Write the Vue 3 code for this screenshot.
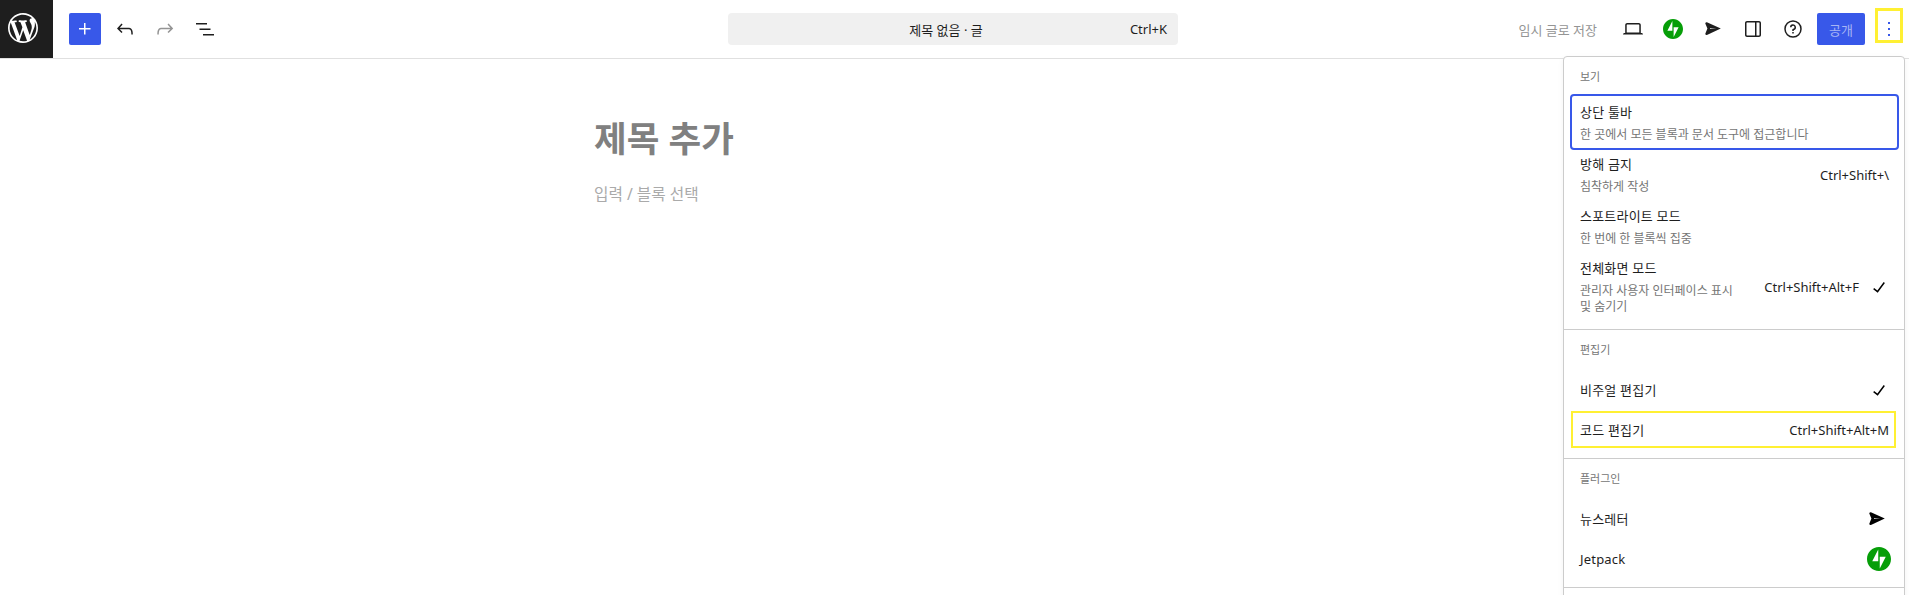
<template>
  <div class="page">
    <header class="topbar">
      <div class="logo">
        <svg viewBox="0 0 20 20" width="30" height="30" fill="#fff">
          <path d="M20 10c0-5.51-4.49-10-10-10C4.48 0 0 4.49 0 10c0 5.52 4.48 10 10 10 5.51 0 10-4.48 10-10zM7.78 15.37L4.37 6.22c.55-.02 1.17-.08 1.17-.08.5-.06.44-1.13-.06-1.11 0 0-1.45.11-2.37.11-.18 0-.37 0-.58-.01C4.12 2.69 6.87 1.11 10 1.11c2.33 0 4.45.87 6.05 2.34-.68-.11-1.65.39-1.65 1.58 0 .74.45 1.36.9 2.1.35.61.55 1.36.55 2.46 0 1.49-1.4 5-1.4 5l-3.03-8.37c.54-.02.82-.17.82-.17.5-.05.44-1.25-.06-1.22 0 0-1.44.12-2.38.12-.87 0-2.33-.12-2.33-.12-.5-.03-.56 1.2-.06 1.22l.92.08 1.26 3.41zM17.41 10c.24-.64.74-1.87.43-4.25.7 1.29 1.05 2.71 1.05 4.25 0 3.29-1.73 6.24-4.4 7.78.97-2.59 1.94-5.2 2.92-7.78zM6.1 18.09C3.12 16.65 1.11 13.53 1.11 10c0-1.3.23-2.48.72-3.59C3.25 10.3 4.67 14.2 6.1 18.09zm4.03-6.63l2.58 6.98c-.86.29-1.76.45-2.71.45-.79 0-1.57-.11-2.29-.33.81-2.38 1.62-4.74 2.42-7.1z" />
        </svg>
      </div>

      <div class="tools">
        <button class="add-btn">
          <svg viewBox="0 0 24 24" width="24" height="24" fill="#fff"><path d="M11 12.5V17.5H12.5V12.5H17.5V11H12.5V6H11V11H6V12.5H11Z" /></svg>
        </button>
        <button class="icon-btn">
          <svg viewBox="0 0 24 24" width="24" height="24"><path d="M18.3 11.7c-.6-.6-1.4-.9-2.3-.9H6.7l2.9-3.3-1.1-1-4.5 5L8.5 16l1-1-2.7-2.7H16c.5 0 .9.2 1.3.5 1 1 1 3.4 1 4.5v.3h1.5v-.2c0-1.5 0-4.3-1.5-5.7z" /></svg>
        </button>
        <button class="icon-btn muted">
          <svg viewBox="0 0 24 24" width="24" height="24"><path d="M15.6 6.5l-1.1 1 2.9 3.3H8c-.9 0-1.7.3-2.3.9-1.4 1.5-1.4 4.2-1.4 5.6v.2h1.5v-.3c0-1.1 0-3.5 1-4.5.3-.3.7-.5 1.3-.5h9.2L14.5 15l1.1 1.1 4.6-4.6-4.6-5z" /></svg>
        </button>
        <button class="icon-btn">
          <svg viewBox="0 0 24 24" width="24" height="24"><path d="M3 6h11v1.5H3V6zm3.5 5.5h11V13h-11v-1.5zM21 17H10v1.5h11V17z" /></svg>
        </button>
      </div>

      <div class="command">
        <span class="command-title">제목 없음 · 글</span>
        <span class="command-key">Ctrl+K</span>
      </div>

      <div class="actions">
        <span class="save">임시 글로 저장</span>
        <button class="icon-btn">
          <svg viewBox="0 0 24 24" width="24" height="24"><path d="M20.5 16h-.7V8c0-1.1-.9-2-2-2H6.2c-1.1 0-2 .9-2 2v8h-.7c-.8 0-1.5.7-1.5 1.5h20c0-.8-.7-1.5-1.5-1.5zM5.7 8c0-.3.2-.5.5-.5h11.6c.3 0 .5.2.5.5v7.6H5.7V8z" /></svg>
        </button>
        <button class="icon-btn">
          <svg viewBox="0 0 32 32" width="20" height="20"><path fill="#069e08" d="M16 0C7.2 0 0 7.2 0 16s7.2 16 16 16 16-7.2 16-16S24.8 0 16 0zm-1 18.9H7l8-15.6v15.6zm2-5.8h8l-8 15.6V13.1z" /></svg>
        </button>
        <button class="icon-btn">
          <svg viewBox="0 0 24 24" width="24" height="24"><path fill-rule="evenodd" d="M5.9 5.3c-.9-.4-1.9.5-1.5 1.4l2 4.9-2 4.9c-.4.9.6 1.8 1.5 1.4L19.8 11.6 5.9 5.3zM9 11.3l6.5.3-6.5.3z" /></svg>
        </button>
        <button class="icon-btn">
          <svg viewBox="0 0 24 24" width="24" height="24"><path d="M18 4H6c-1.1 0-2 .9-2 2v12c0 1.1.9 2 2 2h12c1.1 0 2-.9 2-2V6c0-1.1-.9-2-2-2zm-4 14.5H6c-.3 0-.5-.2-.5-.5V6c0-.3.2-.5.5-.5h8v13zm4.5-.5c0 .3-.2.5-.5.5h-2.5v-13H18c.3 0 .5.2.5.5v12z" /></svg>
        </button>
        <button class="icon-btn">
          <svg viewBox="0 0 24 24" width="24" height="24"><path d="M12 4.75a7.25 7.25 0 100 14.5 7.25 7.25 0 000-14.5zM3.25 12a8.75 8.75 0 1117.5 0 8.75 8.75 0 01-17.5 0zM12 8.75a1.5 1.5 0 01.167 2.99c-.465.052-.917.44-.917 1.01V14h1.5v-.845A3 3 0 109 10.25h1.5a1.5 1.5 0 011.5-1.5zM11.25 15v1.5h1.5V15h-1.5z" /></svg>
        </button>
        <button class="publish">공개</button>
        <button class="more-btn">
          <svg viewBox="0 0 24 24" width="24" height="24" fill="#3858e9"><path d="M13 19h-2v-2h2v2zm0-6h-2v-2h2v2zm0-6h-2V5h2v2z" /></svg>
        </button>
      </div>
    </header>

    <main class="editor">
      <h1 class="post-title">제목 추가</h1>
      <p class="post-hint">입력 / 블록 선택</p>
    </main>

    <!-- Options dropdown -->
    <div class="menu">
      <section v-for="group in groups" :key="group.label" class="menu-group">
        <div class="group-label">{{ group.label }}</div>
        <div
          v-for="item in group.items"
          :key="item.title"
          class="menu-item"
          :class="{ focused: item.focused, marked: item.marked, 'has-desc': item.desc }"
        >
          <div class="item-text">
            <div class="item-title">{{ item.title }}</div>
            <div v-if="item.desc" class="item-desc">{{ item.desc }}</div>
          </div>
          <span v-if="item.shortcut" class="item-key">{{ item.shortcut }}</span>
          <svg v-if="item.icon === 'check'" class="item-icon" viewBox="0 0 24 24" width="24" height="24"><path d="M16.7 7.1l-6.3 8.5-3.3-2.5-.9 1.2 4.5 3.4L17.9 8z" /></svg>
          <svg v-if="item.icon === 'send'" class="item-icon send" viewBox="0 0 24 24" width="24" height="24"><path fill-rule="evenodd" d="M5.9 5.3c-.9-.4-1.9.5-1.5 1.4l2 4.9-2 4.9c-.4.9.6 1.8 1.5 1.4L19.8 11.6 5.9 5.3zM9 11.3l6.5.3-6.5.3z" /></svg>
          <svg v-if="item.icon === 'jetpack'" class="item-icon" viewBox="0 0 32 32" width="24" height="24"><path fill="#069e08" d="M16 0C7.2 0 0 7.2 0 16s7.2 16 16 16 16-7.2 16-16S24.8 0 16 0zm-1 18.9H7l8-15.6v15.6zm2-5.8h8l-8 15.6V13.1z" /></svg>
        </div>
      </section>
      <section class="menu-group last"></section>
    </div>
  </div>
</template>

<script setup>
const groups = [
  {
    label: '보기',
    items: [
      { title: '상단 툴바', desc: '한 곳에서 모든 블록과 문서 도구에 접근합니다', focused: true },
      { title: '방해 금지', desc: '침착하게 작성', shortcut: 'Ctrl+Shift+\\' },
      { title: '스포트라이트 모드', desc: '한 번에 한 블록씩 집중' },
      { title: '전체화면 모드', desc: '관리자 사용자 인터페이스 표시 및 숨기기', shortcut: 'Ctrl+Shift+Alt+F', icon: 'check' }
    ]
  },
  {
    label: '편집기',
    items: [
      { title: '비주얼 편집기', icon: 'check' },
      { title: '코드 편집기', shortcut: 'Ctrl+Shift+Alt+M', marked: true }
    ]
  },
  {
    label: '플러그인',
    items: [
      { title: '뉴스레터', icon: 'send' },
      { title: 'Jetpack', icon: 'jetpack' }
    ]
  }
]
</script>

<style>
html,
body {
  margin: 0;
  background: #fff;
}
</style>

<style scoped>
.page {
  position: relative;
  height: 595px;
  overflow: hidden;
  background: #fff;
  color: #1e1e1e;
  font-family: "Noto Sans", "Noto Sans CJK KR", sans-serif;
  font-size: 13px;
}

button {
  border: 0;
  padding: 0;
  background: none;
  font: inherit;
  display: flex;
  align-items: center;
  justify-content: center;
}

.topbar {
  display: grid;
  grid-template-columns: 728px 450px 1fr;
  align-items: center;
  height: 58px;
  border-bottom: 1px solid #e0e0e0;
  position: relative;
}

.logo {
  position: absolute;
  left: 0;
  top: 0;
  width: 53px;
  height: 58px;
  box-sizing: border-box;
  padding: 0 0 2px 8px;
  background: #1e1e1e;
  display: flex;
  align-items: center;
}

.tools {
  display: flex;
  align-items: center;
  padding-left: 69px;
  gap: 8px;
}

.add-btn {
  width: 32px;
  height: 32px;
  border-radius: 2px;
  background: #3858e9;
}

.icon-btn {
  width: 32px;
  height: 32px;
  fill: #1e1e1e;
}

.icon-btn.muted {
  fill: #949494;
}

.command {
  height: 32px;
  background: #f0f0f0;
  border-radius: 4px;
  position: relative;
  display: flex;
  align-items: center;
  justify-content: center;
  padding: 0 12px;
}

.command-title {
  margin-right: 14px;
}

.command-key {
  position: absolute;
  right: 11px;
}

.actions {
  display: flex;
  align-items: center;
  justify-content: flex-end;
  gap: 8px;
  padding-right: 8px;
}

.save {
  color: #949494;
  margin-right: 12px;
}

.publish {
  width: 48px;
  height: 32px;
  border-radius: 2px;
  background: #3858e9;
  color: #a7b5f4;
}

.more-btn {
  position: relative;
  width: 24px;
  height: 32px;
  margin-left: 4px;
}

/* yellow annotation box drawn over the button */
.more-btn::after {
  content: "";
  position: absolute;
  top: -5px;
  left: -2px;
  width: 28px;
  height: 35px;
  box-sizing: border-box;
  border: 3px solid #fff033;
}

.editor {
  width: 721px;
  margin: 0 auto;
  padding-top: 52px;
}

.post-title {
  margin: 0;
  font-size: 35.5px;
  line-height: 54px;
  font-weight: 700;
  color: #808080;
}

.post-hint {
  margin: 17px 0 0;
  font-size: 15.7px;
  line-height: 24px;
  color: #aaa;
}

.menu {
  position: absolute;
  top: 56px;
  right: 4px;
  width: 340px;
  background: #fff;
  border: 1px solid #ccc;
  border-radius: 4px;
  box-shadow: 0 2px 6px rgba(0, 0, 0, 0.05);
}

.menu-group {
  padding: 8px 7px 8px 8px;
  border-bottom: 1px solid #ccc;
}

.menu-group:first-child {
  padding-bottom: 9px;
}

.menu-group.last {
  height: 40px;
  border-bottom: 0;
}

.group-label {
  box-sizing: border-box;
  padding: 4px 8px 0;
  height: 32px;
  font-size: 11px;
  line-height: 16px;
  color: #757575;
}

.menu-group:first-child .group-label {
  height: 31px;
}

.menu-item {
  display: flex;
  align-items: center;
  min-height: 40px;
  padding: 0 6px 0 8px;
  position: relative;
}

.menu-item.has-desc {
  padding-top: 6px;
  padding-bottom: 5px;
}

.item-text {
  flex: 1;
  min-width: 0;
}

.item-title {
  line-height: 20px;
  letter-spacing: 0.2px;
}

.item-desc {
  margin-top: 5px;
  max-width: 165px;
  font-size: 12px;
  line-height: 16px;
  color: #757575;
}

.focused .item-desc {
  max-width: none;
}

.item-key {
  white-space: nowrap;
  margin-right: 2px;
}

.item-icon {
  margin-left: 8px;
  flex: none;
}

.item-icon.send {
  margin-right: 2px;
}

.item-key + .item-icon {
  margin-left: 6px;
}

.menu-item.focused {
  outline: 2px solid #3858e9;
  border-radius: 2px;
}

/* yellow annotation box drawn over the row */
.menu-item.marked::after {
  content: "";
  position: absolute;
  top: 1px;
  bottom: 2px;
  left: -1px;
  right: 1px;
  border: 2px solid #fff033;
}
</style>
